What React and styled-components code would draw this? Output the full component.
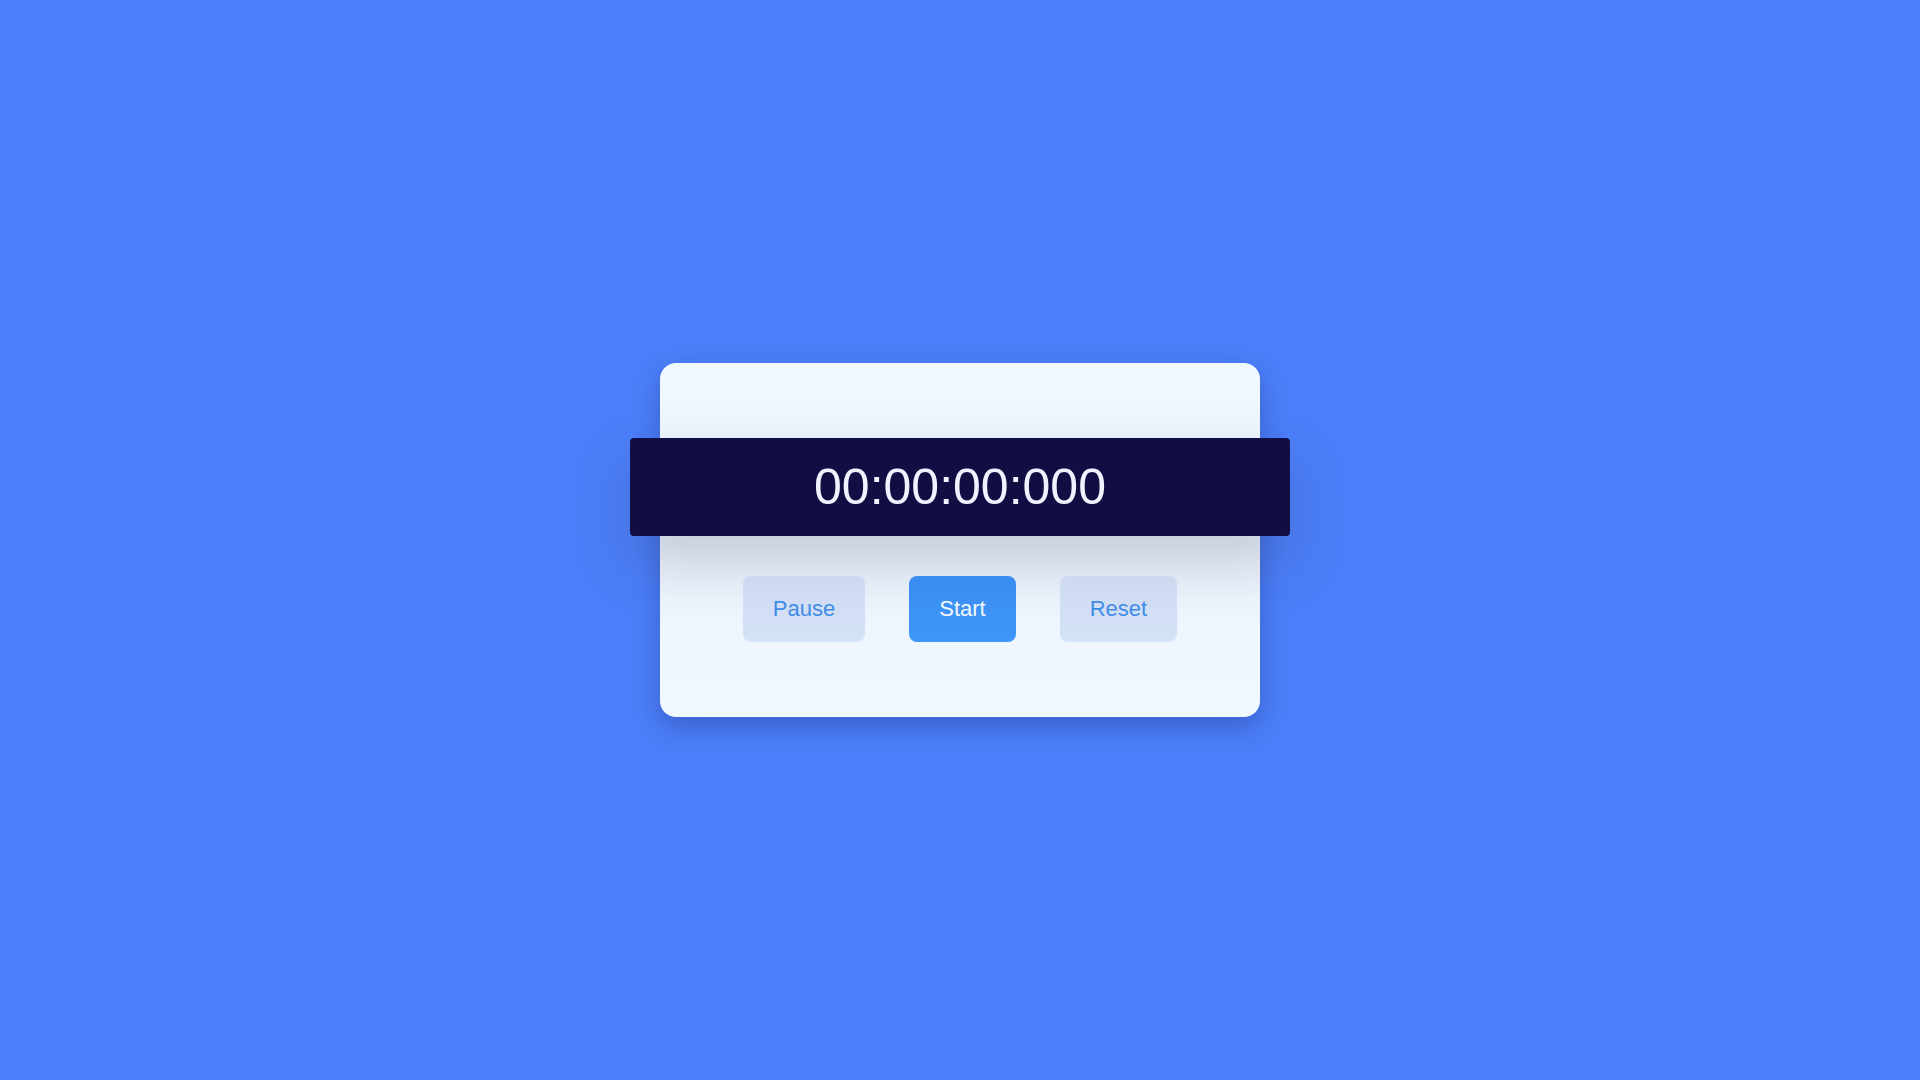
import React from "react";
import styled, { createGlobalStyle } from "styled-components";

const Global = createGlobalStyle`
  html, body { margin: 0; padding: 0; }
  body {
    background: #4b7ef8;
    font-family: "Liberation Sans", Arial, sans-serif;
  }
  #root { min-height: 100vh; }
`;

const Page = styled.div`
  min-height: 100vh;
  display: flex;
  align-items: center;
  justify-content: center;
`;

const Card = styled.div`
  width: 600px;
  box-sizing: border-box;
  padding: 75px 0;
  border-radius: 16px;
  background: linear-gradient(180deg, #f1f8ff 0%, #ecf3fc 50%, #f1f8ff 100%);
  box-shadow: 0 10px 24px rgba(20, 30, 90, 0.28);
  display: flex;
  flex-direction: column;
  align-items: center;
  gap: 40px;
`;

const Display = styled.div`
  width: 660px;
  box-sizing: border-box;
  padding: 20px 0;
  background: #120d42;
  border-radius: 4px;
  color: #eef4ff;
  font-size: 50px;
  line-height: 58px;
  text-align: center;
  box-shadow: 0 26px 56px rgba(50, 60, 90, 0.22);
`;

const Row = styled.div`
  display: flex;
  gap: 44px;
  justify-content: center;
`;

const Button = styled.button`
  font-family: "Liberation Sans", Arial, sans-serif;
  font-size: 22px;
  line-height: 26px;
  padding: 20px 30px;
  border: none;
  border-radius: 8px;
  cursor: pointer;
  color: ${(p) => (p.$primary ? "#f4f8ff" : "#3f8ce6")};
  background: ${(p) =>
    p.$primary
      ? "linear-gradient(180deg, #3a8cef 0%, #3e97fb 100%)"
      : "linear-gradient(180deg, #cdd9f1 0%, #d5e3f8 100%)"};
`;

export default function App() {
  return (
    <>
      <Global />
      <Page>
        <Card>
          <Display>00:00:00:000</Display>
          <Row>
            <Button>Pause</Button>
            <Button $primary>Start</Button>
            <Button>Reset</Button>
          </Row>
        </Card>
      </Page>
    </>
  );
}
